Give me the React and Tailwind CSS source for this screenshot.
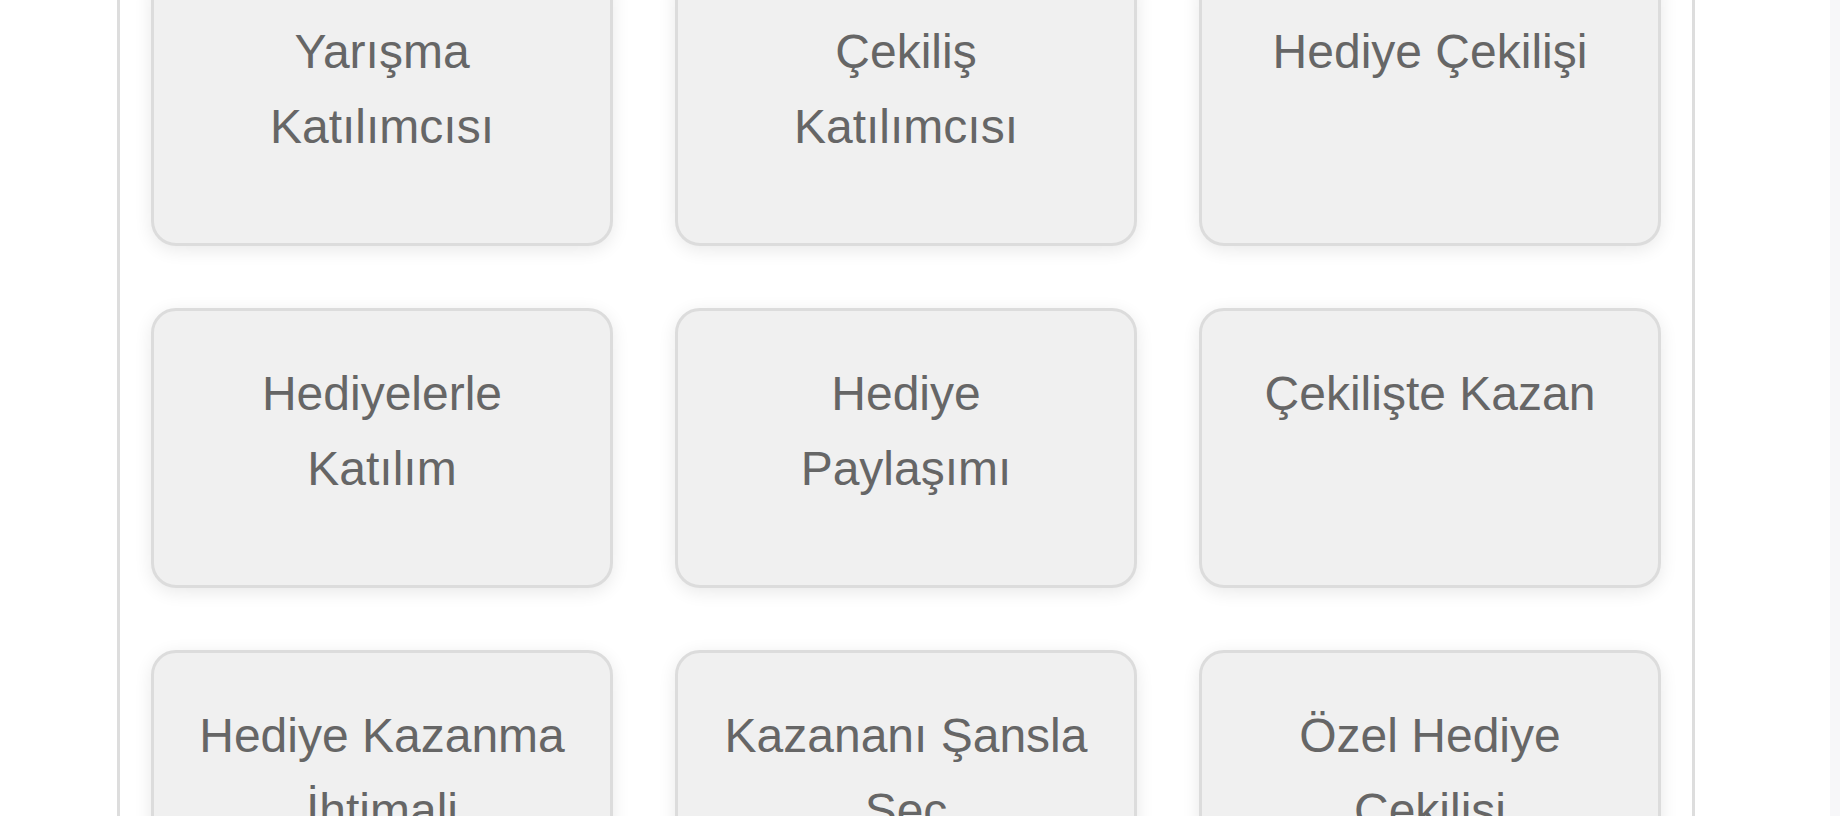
import React from "react";

const items = [
  "Yarışma Katılımcısı",
  "Çekiliş Katılımcısı",
  "Hediye Çekilişi",
  "Hediyelerle Katılım",
  "Hediye Paylaşımı",
  "Çekilişte Kazan",
  "Hediye Kazanma İhtimali",
  "Kazananı Şansla Seç",
  "Özel Hediye Çekilişi",
];

export default function App() {
  return (
    <div className="w-[1840px] h-[816px] overflow-hidden bg-white flex font-['Liberation_Sans',Arial,sans-serif]">
      <div className="w-[117px] shrink-0" />
      <div className="w-[1578px] shrink-0 border-x-[3px] border-[#dddddd] h-full overflow-hidden">
        <div className="grid grid-cols-3 gap-x-[62px] gap-y-[62px] px-[31px] mt-[-34px]">
          {items.map((t) => (
            <div
              key={t}
              className="h-[280px] rounded-[25px] border-[3px] border-[#dcdcdc] bg-[#f0f0f0] shadow-[0_4px_18px_rgba(0,0,0,0.09)] px-[44px] pt-[45px] text-center text-[48px] leading-[75px] text-[#666666]"
            >
              {t}
            </div>
          ))}
        </div>
      </div>
      <div className="flex-1" />
      <div className="w-[10px] shrink-0 bg-[#f7f7f9]" />
    </div>
  );
}
